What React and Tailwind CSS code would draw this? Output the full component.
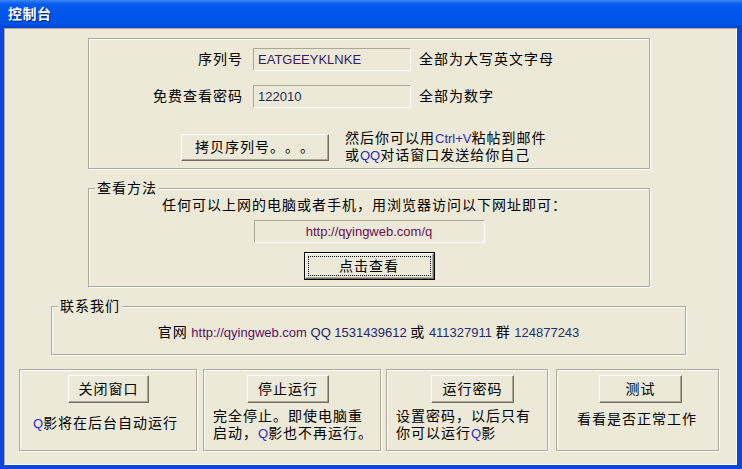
import React from 'react';

// XP style "控制台" dialog

const etched = 'border border-[#aca899] shadow-[inset_1px_1px_0_#fff,1px_1px_0_#fff]';
const sunken = 'border border-t-[#aca899] border-l-[#aca899] border-b-white border-r-white';
const raised = 'border border-t-white border-l-white border-b-[#716f64] border-r-[#716f64] shadow-[inset_-1px_-1px_0_#aca899]';

const Button = ({ className = '', children }) => (
  <div className={`flex items-center justify-center ${raised} ${className}`}>{children}</div>
);

const DefaultButton = ({ className = '', children }) => (
  <div className={`flex border border-black ${className}`}>
    <div className={`flex flex-1 p-[2px] ${raised}`}>
      <div className="flex flex-1 items-center justify-center border border-dotted border-black">{children}</div>
    </div>
  </div>
);

const En = ({ className = '', children }) => (
  <span className={`text-[13px] tracking-normal ${className}`}>{children}</span>
);

export default function App() {
  return (
    <div className="w-[742px] h-[469px] flex flex-col bg-[#0b47df] font-['Liberation_Sans','Noto_Sans_CJK_SC',sans-serif] text-[14px] tracking-[1px] text-black [text-spacing-trim:space-all]">
      {/* title bar */}
      <div className="h-[28px] flex items-center pl-[8px] bg-[linear-gradient(to_bottom,#3a86f2_0%,#0a5cf0_14%,#0055ea_50%,#0052e6_86%,#003fcc_100%)]">
        <span className="text-white font-bold text-[14px] tracking-[0.5px] [text-shadow:1px_1px_0_#0a246a]">控制台</span>
      </div>

      {/* client area */}
      <div className="flex-1 ml-[4px] mr-[5px] mb-[4px] flex flex-col bg-[#ece9d8] border border-t-[#aca899] border-l-[#aca899] border-b-white border-r-white">
        {/* serial panel */}
        <div className={`ml-[83px] mt-[9px] w-[562px] h-[131px] flex flex-col pt-[9px] ${etched}`}>
          <div className="flex items-center h-[23px]">
            <div className="w-[154px] text-right">序列号</div>
            <div className={`ml-[10px] w-[158px] h-[23px] flex items-center pl-[4px] ${sunken}`}>
              <En className="text-[#3b1c5a]">EATGEEYKLNKE</En>
            </div>
            <div className="ml-[8px]">全部为大写英文字母</div>
          </div>
          <div className="flex items-center h-[23px] mt-[14px]">
            <div className="w-[154px] text-right">免费查看密码</div>
            <div className={`ml-[10px] w-[158px] h-[23px] flex items-center pl-[4px] ${sunken}`}>
              <En className="text-[#1e2a5e]">122010</En>
            </div>
            <div className="ml-[8px]">全部为数字</div>
          </div>
          <div className="flex items-center mt-[22px]">
            <Button className="ml-[92px] w-[148px] h-[27px]">拷贝序列号。。。</Button>
            <div className="ml-[16px] leading-[16px] whitespace-nowrap">
              然后你可以用<En className="text-[#2b2bb0]">Ctrl+V</En>粘帖到邮件
              <br />
              或<En className="text-[#2b2bb0]">QQ</En>对话窗口发送给你自己
            </div>
          </div>
        </div>

        {/* 查看方法 */}
        <fieldset className={`mt-[11px] ml-[83px] w-[562px] pb-[6px] ${etched}`}>
          <legend className="ml-[6px] px-[2px] leading-[16px] bg-[#ece9d8]">查看方法</legend>
          <div className="pl-[73px] leading-[18px] whitespace-nowrap">任何可以上网的电脑或者手机，用浏览器访问以下网址即可：</div>
          <div className={`mx-auto mt-[6px] w-[231px] h-[23px] flex items-center justify-center ${sunken}`}>
            <En className="text-[#6b1050]">http://qyingweb.com/q</En>
          </div>
          <DefaultButton className="mx-auto mt-[9px] w-[131px] h-[28px]">点击查看</DefaultButton>
        </fieldset>

        {/* 联系我们 */}
        <fieldset className={`mt-[11px] ml-[46px] w-[635px] pb-[12px] ${etched}`}>
          <legend className="ml-[6px] px-[2px] leading-[16px] bg-[#ece9d8]">联系我们</legend>
          <div className="pt-[9px] leading-[18px] text-center whitespace-nowrap">
            官网<En className="text-[#5a1060]"> http://qyingweb.com </En>
            <En className="text-[#24246e]">QQ 1531439612 </En>或
            <En className="text-[#24306e]"> 411327911 </En>群
            <En className="text-[#1f3070]"> 124877243</En>
          </div>
        </fieldset>

        {/* action panels */}
        <div className="flex mt-[14px] ml-[14px] h-[82px]">
          <div className={`w-[178px] flex flex-col ${etched}`}>
            <Button className="mt-[5px] ml-[48px] w-[81px] h-[28px]">关闭窗口</Button>
            <div className="mt-[12px] ml-[13px] leading-[17px] whitespace-nowrap">
              <En className="text-[#2a2acc]">Q</En>影将在后台自动运行
            </div>
          </div>
          <div className={`ml-[6px] w-[178px] flex flex-col ${etched}`}>
            <Button className="mt-[5px] ml-[43px] w-[82px] h-[28px]">停止运行</Button>
            <div className="mt-[5px] ml-[9px] leading-[17px] whitespace-nowrap">
              完全停止。即使电脑重
              <br />
              启动，<En className="text-[#2a2acc]">Q</En>影也不再运行。
            </div>
          </div>
          <div className={`ml-[5px] w-[162px] flex flex-col ${etched}`}>
            <Button className="mt-[5px] ml-[44px] w-[83px] h-[28px]">运行密码</Button>
            <div className="mt-[5px] ml-[9px] leading-[17px] whitespace-nowrap">
              设置密码，以后只有
              <br />
              你可以运行<En className="text-[#2a2acc]">Q</En>影
            </div>
          </div>
          <div className={`ml-[8px] w-[163px] flex flex-col ${etched}`}>
            <Button className="mt-[5px] ml-[42px] w-[83px] h-[28px]">测试</Button>
            <div className="mt-[8px] ml-[20px] leading-[17px] whitespace-nowrap">看看是否正常工作</div>
          </div>
        </div>
      </div>
    </div>
  );
}
